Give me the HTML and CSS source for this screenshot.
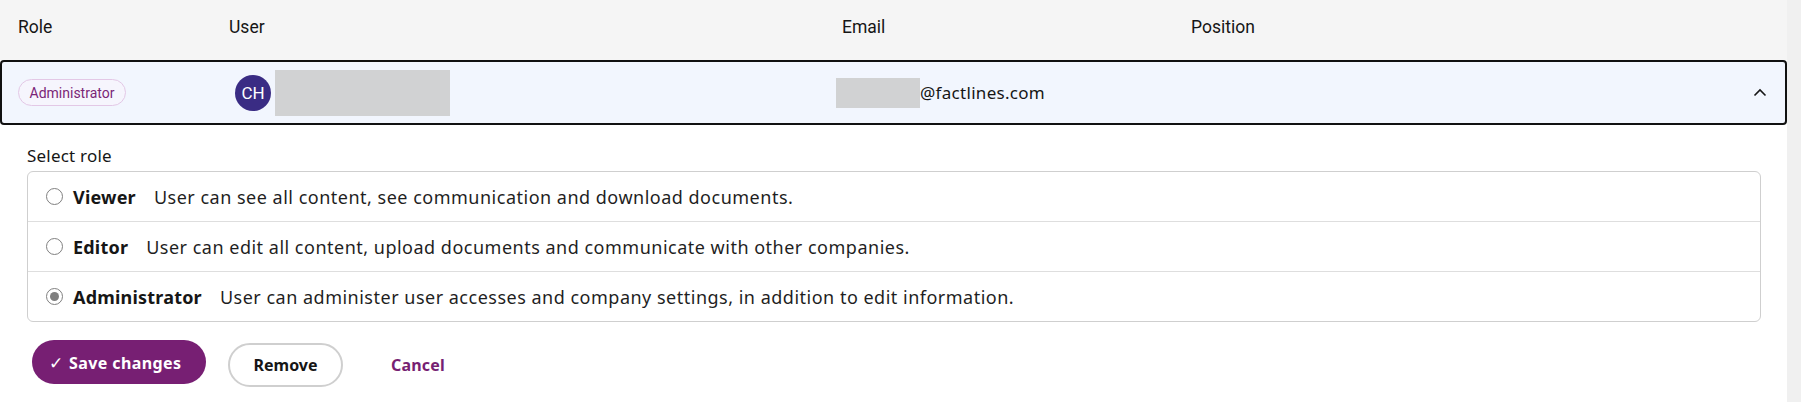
FILE: index.html
```html
<!DOCTYPE html>
<html lang="en">
<head>
<meta charset="utf-8">
<title>Users</title>
<link rel="stylesheet" href="styles.css">
</head>
<body>
<div class="page">
  <main class="main">
    <div class="table-head">
      <div class="th">Role</div>
      <div class="th">User</div>
      <div class="th">Email</div>
      <div class="th">Position</div>
    </div>
    <div class="user-row">
      <div class="cell-role"><span class="badge">Administrator</span></div>
      <div class="cell-user">
        <span class="avatar">CH</span>
        <span class="redact redact-name"></span>
      </div>
      <div class="cell-email">
        <span class="redact redact-email"></span><span class="email-domain">@factlines.com</span>
      </div>
      <div class="cell-toggle">
        <svg class="chevron" width="14" height="9" viewBox="0 0 14 9"><path d="M1.5 7.5 L7 2 L12.5 7.5" fill="none" stroke="#161616" stroke-width="1.6"/></svg>
      </div>
    </div>
    <div class="expand">
      <div class="select-label">Select role</div>
      <div class="options">
        <label class="option">
          <span class="radio"></span>
          <span class="opt-name">Viewer</span>
          <span class="opt-desc">User can see all content, see communication and download documents.</span>
        </label>
        <label class="option">
          <span class="radio"></span>
          <span class="opt-name">Editor</span>
          <span class="opt-desc">User can edit all content, upload documents and communicate with other companies.</span>
        </label>
        <label class="option">
          <span class="radio radio-on"></span>
          <span class="opt-name">Administrator</span>
          <span class="opt-desc">User can administer user accesses and company settings, in addition to edit information.</span>
        </label>
      </div>
      <div class="actions">
        <button class="btn btn-primary"><span class="check">&#10003;</span>Save changes</button>
        <button class="btn btn-outline">Remove</button>
        <button class="btn btn-link">Cancel</button>
      </div>
    </div>
  </main>
  <div class="scroll-track"></div>
</div>
</body>
</html>
```
FILE: styles.css
```css
html, body {
  margin: 0;
  padding: 0;
  background: #ffffff;
}
body {
  font-family: "Noto Sans", "Open Sans", sans-serif;
  color: #161616;
  height: 402px;
  overflow: hidden;
}
.page {
  display: flex;
  height: 402px;
}
.main {
  flex: 1;
  min-width: 0;
}
.scroll-track {
  width: 14px;
  background: #f0f0f0;
}

.table-head {
  height: 60px;
  background: #f5f5f5;
  display: grid;
  grid-template-columns: 211px 613px 349px 1fr;
  align-items: center;
  padding: 0 0 6px 18px;
  box-sizing: border-box;
}
.th {
  font-family: Roboto, "Noto Sans", sans-serif;
  font-size: 17.5px;
  color: #161616;
}

.user-row {
  height: 65px;
  box-sizing: border-box;
  border: 2px solid #111111;
  border-radius: 4px;
  background: #f2f6fe;
  display: grid;
  grid-template-columns: 217px 601px 1fr 32px;
  align-items: center;
  padding-left: 16px;
}
.badge {
  display: inline-flex;
  align-items: center;
  justify-content: center;
  width: 108px;
  height: 27px;
  box-sizing: border-box;
  border: 1px solid #e3c8e6;
  border-radius: 14px;
  font-family: Roboto, sans-serif;
  font-size: 14px;
  color: #7a2677;
  background: #f6f5fd;
}
.cell-user {
  display: flex;
  align-items: center;
  gap: 4px;
}
.avatar {
  width: 36px;
  height: 36px;
  border-radius: 50%;
  background: #3a2c84;
  color: #ffffff;
  display: inline-flex;
  align-items: center;
  justify-content: center;
  font-family: Roboto, sans-serif;
  font-size: 17px;
}
.redact {
  display: inline-block;
  background: #d1d2d3;
}
.redact-name {
  width: 175px;
  height: 46px;
}
.cell-email {
  display: flex;
  align-items: center;
}
.redact-email {
  width: 84px;
  height: 30px;
}
.email-domain {
  font-size: 17px;
  letter-spacing: 0.3px;
}
.cell-toggle {
  display: flex;
  align-items: center;
}
.chevron {
  display: block;
}

.expand {
  padding: 0 26px 0 27px;
}
.select-label {
  font-size: 17px;
  letter-spacing: 0.2px;
  line-height: 20px;
  padding-top: 21px;
  padding-bottom: 5px;
}
.options {
  border: 1px solid #cfcfcf;
  border-radius: 6px;
  background: #ffffff;
}
.option {
  display: flex;
  align-items: center;
  height: 49px;
  padding-left: 18px;
  font-size: 18px;
  letter-spacing: 0.5px;
  border-top: 1px solid #dedede;
}
.option:first-child {
  border-top: none;
}
.radio {
  width: 15px;
  height: 15px;
  border: 1px solid #808080;
  border-radius: 50%;
  background: #ffffff;
  margin-right: 10px;
  position: relative;
  flex: none;
}
.radio-on::after {
  content: "";
  position: absolute;
  left: 3px;
  top: 3px;
  width: 9px;
  height: 9px;
  border-radius: 50%;
  background: #7f7f7f;
}
.opt-name {
  font-weight: 700;
  letter-spacing: 0.2px;
  margin-right: 18px;
}
.opt-desc {
  color: #1f1f1f;
}

.actions {
  display: flex;
  align-items: flex-start;
  margin-top: 18px;
  padding-left: 5px;
}
.btn {
  font-family: "Noto Sans", sans-serif;
  font-size: 16px;
  font-weight: 700;
  height: 44px;
  border-radius: 22px;
  cursor: pointer;
}
.btn-primary {
  width: 174px;
  background: #771f73;
  color: #ffffff;
  border: none;
  letter-spacing: 0.4px;
  padding: 0 8px 0 0;
}
.check {
  font-weight: 400;
  font-size: 17px;
  margin-right: 6px;
}
.btn-outline {
  width: 115px;
  margin-left: 22px;
  margin-top: 3px;
  background: #ffffff;
  color: #161616;
  border: 2px solid #cfcfcf;
}
.btn-link {
  background: none;
  border: none;
  color: #771f73;
  margin-left: 36px;
  margin-top: 3px;
  padding: 0 12px;
  letter-spacing: 0.2px;
}
```
